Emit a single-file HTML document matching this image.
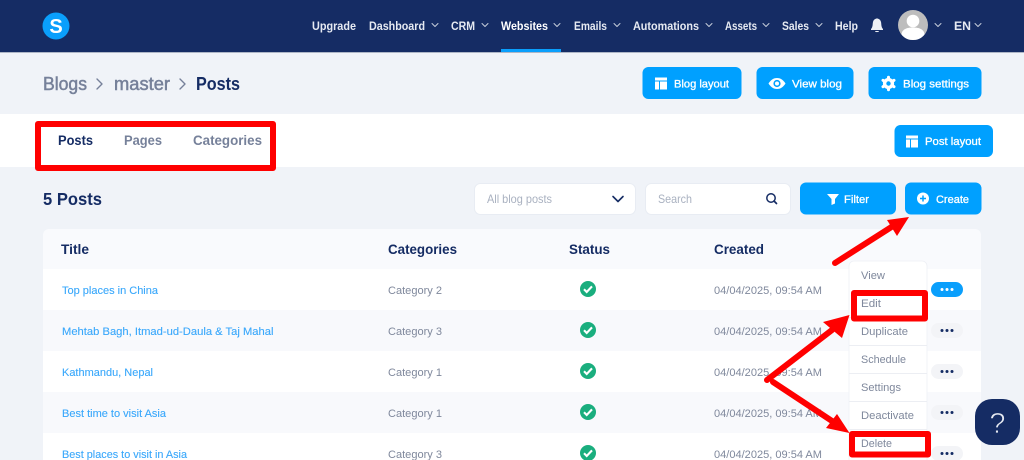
<!DOCTYPE html>
<html lang="en"><head><meta charset="utf-8"><title>Posts</title>
<style>
html,body{margin:0;padding:0;background:#f0f3f8}
body{width:1024px;height:460px;overflow:hidden}
svg{display:block;font-family:"Liberation Sans",sans-serif}
.nav{font-size:11.5px;font-weight:700;fill:#e6eaf2}
.btn{font-size:11px;font-weight:400;fill:#fff;stroke:#fff;stroke-width:.3}
.th{font-size:13.5px;font-weight:700;fill:#152c64}
.link{font-size:11px;fill:#3aa8fb;stroke:#3aa8fb;stroke-width:.12}
.g{font-size:11px;fill:#7f889c}
.m{font-size:11px;fill:#7f889c}
.chev{fill:none;stroke:#c5ccda;stroke-width:1;stroke-linecap:round;stroke-linejoin:round}
.bc{fill:none;stroke:#76819a;stroke-width:1.4;stroke-linecap:round;stroke-linejoin:round}
</style></head><body>
<svg width="1024" height="460" viewBox="0 0 1024 460" xmlns="http://www.w3.org/2000/svg">
<defs>
<path id="tbl" d="M0 0H12V3H0ZM0 4H4V12H0ZM5 4H12V12H5Z" fill="#fff"/>
<g id="chk"><circle r="8" fill="#1aae7e"/><path d="M-4 .3L-1.3 3L4 -2.6" fill="none" stroke="#fff" stroke-width="2.1"/></g>
<g id="dots"><circle cx="-5" r="1.5"/><circle r="1.5"/><circle cx="5" r="1.5"/></g>
<path id="cv" d="M-3 -1.5L0 1.5L3 -1.5"/>
</defs>
<rect width="1024" height="460" fill="#f0f3f8"/>
<rect width="1024" height="52" fill="#152c64"/>
<rect y="52" width="1024" height="1" fill="#aeb6c6"/>
<circle cx="56" cy="26" r="13.5" fill="#0a9ffc"/>
<text x="56" y="33" text-anchor="middle" font-size="20" font-weight="700" fill="#fff">S</text>
<text class="nav" x="312" y="30" textLength="44" lengthAdjust="spacingAndGlyphs">Upgrade</text>
<text class="nav" x="369" y="30" textLength="56" lengthAdjust="spacingAndGlyphs">Dashboard</text>
<use href="#cv" x="435" y="25" class="chev"/>
<text class="nav" x="451" y="30" textLength="24" lengthAdjust="spacingAndGlyphs">CRM</text>
<use href="#cv" x="485" y="25" class="chev"/>
<text class="nav" x="501" y="30" textLength="47" lengthAdjust="spacingAndGlyphs" style="fill:#fff">Websites</text>
<use href="#cv" x="557" y="25" class="chev"/>
<text class="nav" x="574" y="30" textLength="33" lengthAdjust="spacingAndGlyphs">Emails</text>
<use href="#cv" x="617" y="25" class="chev"/>
<text class="nav" x="633" y="30" textLength="66" lengthAdjust="spacingAndGlyphs">Automations</text>
<use href="#cv" x="709" y="25" class="chev"/>
<text class="nav" x="725" y="30" textLength="32" lengthAdjust="spacingAndGlyphs">Assets</text>
<use href="#cv" x="766" y="25" class="chev"/>
<text class="nav" x="782" y="30" textLength="27" lengthAdjust="spacingAndGlyphs">Sales</text>
<use href="#cv" x="819" y="25" class="chev"/>
<text class="nav" x="835" y="30" textLength="23" lengthAdjust="spacingAndGlyphs">Help</text>
<path d="M871 29C873 27 872.5 24 873 22C873.6 19.5 875.5 18.5 877 18.5C878.5 18.5 880.4 19.5 881 22C881.5 24 881 27 883 29V30H871ZM875 31H879C879 32.5 875 32.5 875 31Z" fill="#eef1f6"/>
<circle cx="913" cy="25" r="15" fill="#bdbdbd"/>
<circle cx="913" cy="21" r="6.3" fill="#fff"/>
<path d="M901.5 34.5C902 29 907 27.5 913 27.5C919 27.5 924 29 924.5 34.5C921.5 38.5 917.5 40 913 40C908.5 40 904.5 38.5 901.5 34.5Z" fill="#fff"/>
<use href="#cv" x="938" y="25" class="chev"/>
<text class="nav" x="954" y="30" textLength="17" lengthAdjust="spacingAndGlyphs">EN</text>
<use href="#cv" x="978" y="25" class="chev"/>
<rect x="501" y="49" width="60" height="3" fill="#0a9ffc"/>

<text x="43" y="90" font-size="18" fill="#76819a" stroke="#76819a" stroke-width=".5" textLength="44" lengthAdjust="spacingAndGlyphs">Blogs</text>
<path class="bc" d="M97 79L102 84L97 89"/>
<text x="114" y="90" font-size="18" fill="#76819a" stroke="#76819a" stroke-width=".5" textLength="56" lengthAdjust="spacingAndGlyphs">master</text>
<path class="bc" d="M180 79L185 84L180 89"/>
<text x="196" y="90" font-size="18" font-weight="700" fill="#152c64" textLength="44" lengthAdjust="spacingAndGlyphs">Posts</text>

<g fill="#00a0ff">
<rect x="642.5" y="67" width="99" height="32" rx="6"/>
<rect x="756.5" y="67" width="97" height="32" rx="6"/>
<rect x="868.5" y="67" width="113" height="32" rx="6"/>
</g>
<use href="#tbl" x="655" y="77.5"/>
<text class="btn" x="674" y="87.5" textLength="55" lengthAdjust="spacingAndGlyphs">Blog layout</text>
<path d="M768.5 83.5C771 79.5 774 78 777 78C780 78 783 79.5 785.5 83.5C783 87.5 780 89 777 89C774 89 771 87.5 768.5 83.5Z" fill="#fff"/>
<circle cx="777" cy="83.5" r="3.6" fill="#00a0ff"/><circle cx="777" cy="83.5" r="2" fill="#fff"/>
<text class="btn" x="792" y="87.5" textLength="50" lengthAdjust="spacingAndGlyphs">View blog</text>
<circle cx="888.5" cy="83.5" r="5.6" fill="#fff"/>
<g stroke="#fff" stroke-width="3" stroke-linecap="round"><path d="M888.5 77.2V89.8M883 80.3L894 86.7M883 86.7L894 80.3"/></g>
<circle cx="888.5" cy="83.5" r="2.2" fill="#00a0ff"/>
<text class="btn" x="903" y="87.5" textLength="66" lengthAdjust="spacingAndGlyphs">Blog settings</text>

<rect y="114" width="1024" height="53" fill="#fff"/>
<text x="58" y="145" font-size="13.5" font-weight="700" fill="#152c64" textLength="35" lengthAdjust="spacingAndGlyphs">Posts</text>
<text x="124" y="145" font-size="13.5" font-weight="700" fill="#76819a" textLength="38" lengthAdjust="spacingAndGlyphs">Pages</text>
<text x="193" y="145" font-size="13.5" font-weight="700" fill="#76819a" textLength="69" lengthAdjust="spacingAndGlyphs">Categories</text>
<rect x="894.5" y="125" width="98.5" height="32" rx="6" fill="#00a0ff"/>
<use href="#tbl" x="906" y="135.5"/>
<text class="btn" x="925" y="145" textLength="56" lengthAdjust="spacingAndGlyphs">Post layout</text>

<text x="43" y="205" font-size="17.5" font-weight="700" fill="#152c64" textLength="59" lengthAdjust="spacingAndGlyphs">5 Posts</text>
<rect x="474.5" y="183.5" width="161" height="31" rx="6" fill="#fff" stroke="#e8ecf3"/>
<text x="487" y="203" font-size="12" fill="#a9b1c0" textLength="65" lengthAdjust="spacingAndGlyphs">All blog posts</text>
<path d="M613 196.500L618 201.500L623 196.500" fill="none" stroke="#152c64" stroke-width="1.6" stroke-linecap="round" stroke-linejoin="round"/>
<rect x="645.5" y="183.5" width="145" height="31" rx="6" fill="#fff" stroke="#e8ecf3"/>
<text x="658" y="203" font-size="12" fill="#a9b1c0" textLength="34" lengthAdjust="spacingAndGlyphs">Search</text>
<circle cx="771" cy="198" r="4.2" fill="none" stroke="#152c64" stroke-width="1.5"/>
<path d="M774 201L776.5 203.5" stroke="#152c64" stroke-width="1.7" stroke-linecap="round"/>
<rect x="800" y="182.5" width="96" height="32" rx="6" fill="#00a0ff"/>
<path d="M827 194H839L835 199V203.5L831.5 205V199Z" fill="#fff"/>
<text class="btn" x="844" y="203" textLength="25" lengthAdjust="spacingAndGlyphs">Filter</text>
<rect x="905" y="182.5" width="76.5" height="32" rx="6" fill="#00a0ff"/>
<circle cx="923" cy="198.5" r="6" fill="#fff"/>
<path d="M920 198.5H926M923 195.5V201.5" stroke="#00a0ff" stroke-width="1.5"/>
<text class="btn" x="936" y="203" textLength="33" lengthAdjust="spacingAndGlyphs">Create</text>

<path d="M43 269V235a6 6 0 0 1 6-6H975a6 6 0 0 1 6 6V269Z" fill="#f9fafd"/>
<rect x="43" y="269" width="938" height="41" fill="#fff"/>
<rect x="43" y="310" width="938" height="41" fill="#f8f9fc"/>
<rect x="43" y="351" width="938" height="41" fill="#fff"/>
<rect x="43" y="392" width="938" height="41" fill="#f8f9fc"/>
<rect x="43" y="433" width="938" height="27" fill="#fff"/>
<text class="th" x="61" y="254" textLength="28" lengthAdjust="spacingAndGlyphs">Title</text>
<text class="th" x="388" y="254" textLength="69" lengthAdjust="spacingAndGlyphs">Categories</text>
<text class="th" x="569" y="254" textLength="41" lengthAdjust="spacingAndGlyphs">Status</text>
<text class="th" x="714" y="254" textLength="50" lengthAdjust="spacingAndGlyphs">Created</text>

<text class="link" x="62" y="294" textLength="96" lengthAdjust="spacingAndGlyphs">Top places in China</text>
<text class="link" x="62" y="335" textLength="211.5" lengthAdjust="spacingAndGlyphs">Mehtab Bagh, Itmad-ud-Daula &amp; Taj Mahal</text>
<text class="link" x="62" y="376" textLength="91" lengthAdjust="spacingAndGlyphs">Kathmandu, Nepal</text>
<text class="link" x="62" y="417" textLength="104" lengthAdjust="spacingAndGlyphs">Best time to visit Asia</text>
<text class="link" x="62" y="458" textLength="125" lengthAdjust="spacingAndGlyphs">Best places to visit in Asia</text>

<text class="g" x="388" y="294" textLength="54" lengthAdjust="spacingAndGlyphs">Category 2</text>
<text class="g" x="388" y="335" textLength="54" lengthAdjust="spacingAndGlyphs">Category 3</text>
<text class="g" x="388" y="376" textLength="54" lengthAdjust="spacingAndGlyphs">Category 1</text>
<text class="g" x="388" y="417" textLength="54" lengthAdjust="spacingAndGlyphs">Category 1</text>
<text class="g" x="388" y="458" textLength="54" lengthAdjust="spacingAndGlyphs">Category 3</text>

<use href="#chk" x="588" y="289"/><use href="#chk" x="588" y="330"/><use href="#chk" x="588" y="371"/><use href="#chk" x="588" y="412"/><use href="#chk" x="588" y="453"/>

<text class="g" x="714" y="294" textLength="108" lengthAdjust="spacingAndGlyphs">04/04/2025, 09:54 AM</text>
<text class="g" x="714" y="335" textLength="108" lengthAdjust="spacingAndGlyphs">04/04/2025, 09:54 AM</text>
<text class="g" x="714" y="376" textLength="108" lengthAdjust="spacingAndGlyphs">04/04/2025, 09:54 AM</text>
<text class="g" x="714" y="417" textLength="108" lengthAdjust="spacingAndGlyphs">04/04/2025, 09:54 AM</text>
<text class="g" x="714" y="458" textLength="108" lengthAdjust="spacingAndGlyphs">04/04/2025, 09:54 AM</text>

<rect x="931" y="282" width="32" height="15" rx="7.5" fill="#0a9ffc"/>
<use href="#dots" x="947" y="289.5" fill="#fff"/>
<g fill="#f3f4f7"><rect x="931" y="323" width="32" height="15" rx="7.5"/><rect x="931" y="364" width="32" height="15" rx="7.5"/><rect x="931" y="405" width="32" height="15" rx="7.5"/><rect x="931" y="446" width="32" height="15" rx="7.5"/></g>
<g fill="#152c64"><use href="#dots" x="947" y="330.5"/><use href="#dots" x="947" y="371.5"/><use href="#dots" x="947" y="412.5"/><use href="#dots" x="947" y="453.5"/></g>

<rect x="849" y="261" width="78" height="205" rx="5" fill="#fff" stroke="#eef0f5" stroke-width=".8"/>
<g stroke="#eceef3"><path d="M849 317.5H927M849 345.5H927M849 373.5H927M849 401.5H927M849 429.5H927"/></g>
<text class="m" x="861" y="279" textLength="24" lengthAdjust="spacingAndGlyphs">View</text>
<text class="m" x="861" y="307" textLength="20" lengthAdjust="spacingAndGlyphs">Edit</text>
<text class="m" x="861" y="335" textLength="47" lengthAdjust="spacingAndGlyphs">Duplicate</text>
<text class="m" x="861" y="363" textLength="45" lengthAdjust="spacingAndGlyphs">Schedule</text>
<text class="m" x="861" y="391" textLength="40" lengthAdjust="spacingAndGlyphs">Settings</text>
<text class="m" x="861" y="419" textLength="53" lengthAdjust="spacingAndGlyphs">Deactivate</text>
<text class="m" x="861" y="447" textLength="31" lengthAdjust="spacingAndGlyphs">Delete</text>

<g fill="none" stroke="#ff0000" stroke-width="6" stroke-linejoin="round">
<rect x="38" y="124" width="235" height="44"/>
<rect x="854" y="293" width="71" height="25.5"/>
<rect x="852" y="434" width="76" height="20.5"/>
</g>
<g stroke="#ff0000" stroke-width="6" stroke-linecap="round">
<path d="M835 263L893 226"/>
<path d="M767 380L832 330"/>
<path d="M773 382L832 421"/>
</g>
<g fill="#ff0000">
<path d="M909 217L887 220L897 236Z"/>
<path d="M849.500 315L823 322L842 338Z"/>
<path d="M849.500 433L837 414L826 428Z"/>
</g>

<rect x="975" y="399" width="45" height="46" rx="17" fill="#152c64"/>
<text x="997.5" y="433" text-anchor="middle" font-size="29" fill="#e6eaf2" stroke="#152c64" stroke-width=".7">?</text>
</svg>
</body></html>
